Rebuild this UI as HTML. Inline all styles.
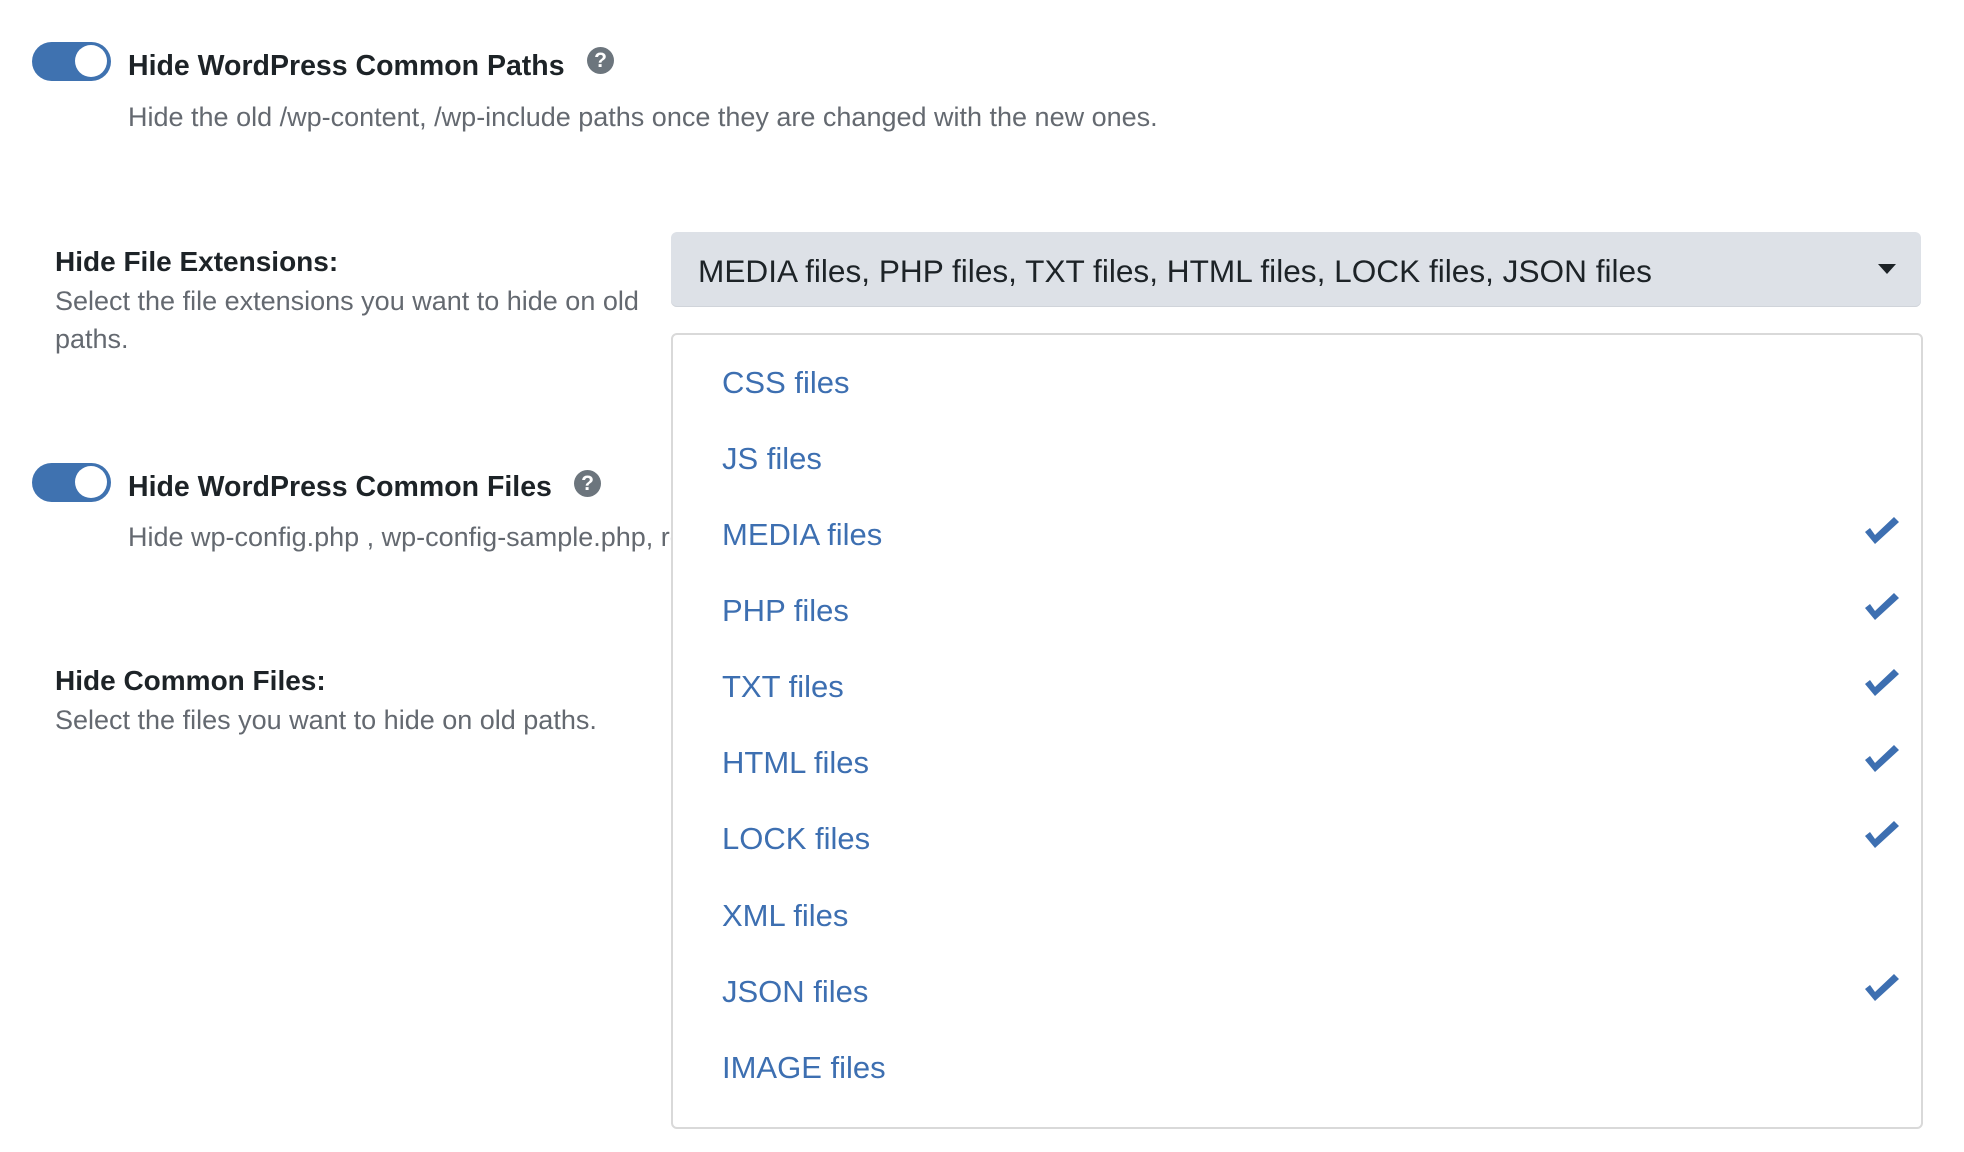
<!DOCTYPE html>
<html><head><meta charset="utf-8">
<style>
html,body{margin:0;padding:0;background:#fff;width:1964px;height:1152px;overflow:hidden;position:relative;font-family:"Liberation Sans",sans-serif;}
.a{position:absolute;white-space:nowrap;line-height:1;}
.tog{position:absolute;left:32px;width:79px;height:39px;border-radius:20px;background:#3f72b0;}
.tog::after{content:"";position:absolute;left:43px;top:3px;width:32px;height:32px;border-radius:50%;background:#fff;}
.q{position:absolute;width:27px;height:27px;border-radius:50%;background:#6c757d;color:#fff;font-weight:bold;font-size:21px;text-align:center;line-height:27px;}
.t{font-weight:bold;font-size:28.5px;color:#1d2327;}
.d{font-size:27px;color:#646970;}
.l{font-weight:bold;font-size:28px;color:#1d2327;}
.it{font-size:31px;color:#3d6fb1;left:722px;}
.ck{position:absolute;left:1865px;width:34px;height:28px;}
</style></head><body>

<div class="tog" style="top:42px"></div>
<div class="a t" style="left:128px;top:52px">Hide WordPress Common Paths</div>
<div class="q" style="left:587px;top:47px">?</div>
<div class="a d" style="left:128px;top:104px">Hide the old /wp-content, /wp-include paths once they are changed with the new ones.</div>

<div class="a l" style="left:55px;top:248px">Hide File Extensions:</div>
<div class="a d" style="left:55px;line-height:38px;top:282px;white-space:normal;width:610px">Select the file extensions you want to hide on old paths.</div>

<div class="tog" style="top:463px"></div>
<div class="a t" style="left:128px;top:473px">Hide WordPress Common Files</div>
<div class="q" style="left:574px;top:470px">?</div>
<div class="a d" style="left:128px;top:524px">Hide wp-config.php , wp-config-sample.php, readme.html, license.txt files</div>

<div class="a l" style="left:55px;top:667px">Hide Common Files:</div>
<div class="a d" style="left:55px;top:707px">Select the files you want to hide on old paths.</div>

<div style="position:absolute;left:671px;top:655px;width:1250px;height:70px;border:1px solid #c3c4c7;border-radius:4px;background:#fff;"></div>

<div style="position:absolute;left:671px;top:232px;width:1250px;height:75px;background:#dde1e7;border-radius:6px;box-shadow:inset 0 -1px 0 #d0d4da;"></div>
<div class="a" style="left:698px;top:256px;font-size:31.6px;color:#1d2327">MEDIA files, PHP files, TXT files, HTML files, LOCK files, JSON files</div>
<svg style="position:absolute;left:1878px;top:264px" width="18" height="10"><path d="M0 0H18L9 10Z" fill="#1d2327"/></svg>

<div style="position:absolute;left:671px;top:333px;width:1248px;height:792px;background:#fff;border:2px solid #d9d9d9;border-radius:6px;"></div>

<div class="a it" style="top:367px">CSS files</div>
<div class="a it" style="top:443px">JS files</div>
<div class="a it" style="top:519px">MEDIA files</div>
<div class="a it" style="top:595px">PHP files</div>
<div class="a it" style="top:671px">TXT files</div>
<div class="a it" style="top:747px">HTML files</div>
<div class="a it" style="top:823px">LOCK files</div>
<div class="a it" style="top:900px">XML files</div>
<div class="a it" style="top:976px">JSON files</div>
<div class="a it" style="top:1052px">IMAGE files</div>

<svg class="ck" style="top:517px" viewBox="0 0 34 28"><path d="M0 15L10 27L34 5L29 0L10 18L5 11Z" fill="#3d6fb1"/></svg>
<svg class="ck" style="top:593px" viewBox="0 0 34 28"><path d="M0 15L10 27L34 5L29 0L10 18L5 11Z" fill="#3d6fb1"/></svg>
<svg class="ck" style="top:669px" viewBox="0 0 34 28"><path d="M0 15L10 27L34 5L29 0L10 18L5 11Z" fill="#3d6fb1"/></svg>
<svg class="ck" style="top:745px" viewBox="0 0 34 28"><path d="M0 15L10 27L34 5L29 0L10 18L5 11Z" fill="#3d6fb1"/></svg>
<svg class="ck" style="top:821px" viewBox="0 0 34 28"><path d="M0 15L10 27L34 5L29 0L10 18L5 11Z" fill="#3d6fb1"/></svg>
<svg class="ck" style="top:974px" viewBox="0 0 34 28"><path d="M0 15L10 27L34 5L29 0L10 18L5 11Z" fill="#3d6fb1"/></svg>

</body></html>
